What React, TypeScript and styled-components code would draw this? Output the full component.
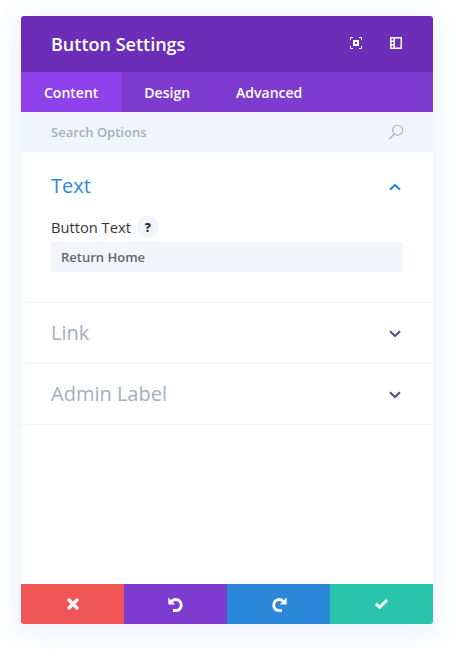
import React from "react";
import styled, { createGlobalStyle } from "styled-components";

const Global = createGlobalStyle`
  html, body { margin: 0; padding: 0; background: #fff; }
  body { font-family: "Open Sans", "Liberation Sans", sans-serif; }
`;

const Page = styled.div`
  width: 454px;
  height: 649px;
  padding: 16px 21px 25px;
  box-sizing: border-box;
  overflow: hidden;
`;

const Panel = styled.div`
  width: 412px;
  height: 608px;
  display: flex;
  flex-direction: column;
  background: #fff;
  border-radius: 3px;
  overflow: hidden;
  box-shadow: 0 5px 30px rgba(43, 135, 218, 0.13);
`;

const Header = styled.div`
  height: 56px;
  flex: none;
  display: flex;
  align-items: center;
  justify-content: space-between;
  background: #6c2eb9;
  padding: 0 31px 0 30px;
`;

const Title = styled.div`
  color: #fff;
  font-size: 18px;
  font-weight: 600;
`;

const HeaderIcons = styled.div`
  display: flex;
  gap: 28px;
  align-items: center;
  margin-top: -3px;
`;

const Tabs = styled.div`
  height: 40px;
  flex: none;
  display: flex;
  background: #7e3bd0;
`;

const Tab = styled.div<{ $active?: boolean }>`
  display: flex;
  align-items: center;
  padding: 0 23px;
  color: #fff;
  font-size: 14px;
  font-weight: 600;
  background: ${(p) => (p.$active ? "#8f42ec" : "transparent")};
`;

const Search = styled.div`
  height: 40px;
  flex: none;
  display: flex;
  align-items: center;
  justify-content: space-between;
  background: #f1f5f9;
  padding: 0 30px;
  color: #a3b0c2;
  font-size: 13px;
  font-weight: 600;
`;

const Section = styled.div<{ $open?: boolean }>`
  flex: none;
  height: ${(p) => (p.$open ? "150px" : "60px")};
  padding: 0 30px;
  border-bottom: 1px solid #f1f5f9;
`;

const SectionHead = styled.div<{ $open?: boolean }>`
  height: ${(p) => (p.$open ? "68px" : "60px")};
  display: flex;
  align-items: center;
  justify-content: space-between;
`;

const SectionTitle = styled.div<{ $open?: boolean }>`
  font-size: 20px;
  font-weight: 400;
  padding-bottom: 2px;
  color: ${(p) => (p.$open ? "#2b87da" : "#a3b0c2")};
`;

const Chevron = styled.svg`
  width: 12px;
  height: 8px;
  margin: 2px 2px 0 0;
  flex: none;
`;

const LabelRow = styled.div`
  display: flex;
  align-items: center;
  gap: 6px;
  height: 22px;
  margin-top: -4px;
`;

const Label = styled.div`
  color: #32373c;
  font-size: 14.7px;
  font-weight: 500;
`;

const Help = styled.div`
  width: 22px;
  height: 22px;
  border-radius: 50%;
  background: #f1f5f9;
  color: #2e2e4a;
  font-size: 12px;
  font-weight: 800;
  display: flex;
  align-items: center;
  justify-content: center;
`;

const Input = styled.div`
  height: 30px;
  margin-top: 4px;
  background: #f1f5f9;
  border-radius: 3px;
  padding: 0 10px;
  display: flex;
  align-items: center;
  color: #4c5866;
  font-size: 13px;
  font-weight: 600;
  opacity: 0.9;
`;

const Spacer = styled.div`
  flex: 1;
`;

const Footer = styled.div`
  height: 40px;
  flex: none;
  display: grid;
  grid-template-columns: repeat(4, 1fr);
`;

const FooterButton = styled.div<{ $bg: string }>`
  background: ${(p) => p.$bg};
  display: flex;
  align-items: center;
  justify-content: center;
`;

const ChevronIcon = ({ up, color }: { up?: boolean; color: string }) => (
  <Chevron viewBox="0 0 12 8">
    <path
      d={up ? "M1 6.700 6 2l5 4.700" : "M1 1.300 6 6l5-4.700"}
      fill="none"
      stroke={color}
      strokeWidth="2.200"
    />
  </Chevron>
);

export default function App() {
  return (
    <Page>
      <Global />
      <Panel>
        <Header>
          <Title>Button Settings</Title>
          <HeaderIcons>
            <svg width="12" height="12" viewBox="0 0 12 12" fill="none">
              <path
                d="M.5 3V.5H3M9 .5h2.500V3M11.500 9v2.500H9M3 11.500H.5V9"
                stroke="#fff"
                strokeWidth="1"
              />
              <path fillRule="evenodd" clipRule="evenodd" d="M3 3h6v6H3zM5 5v2h2V5z" fill="#fff" />
            </svg>
            <svg width="12" height="12" viewBox="0 0 12 12">
              <path
                fillRule="evenodd"
                clipRule="evenodd"
                d="M0 0h12v12H0zM1.500 1.500V3.500H3.500V1.500zM1.500 5V7H3.500V5zM1.500 8.500V10.500H3.500V8.500zM5 1.500V10.500H10.500V1.500z"
                fill="#fff"
              />
            </svg>
          </HeaderIcons>
        </Header>
        <Tabs>
          <Tab $active>Content</Tab>
          <Tab>Design</Tab>
          <Tab>Advanced</Tab>
        </Tabs>
        <Search>
          <span>Search Options</span>
          <svg width="16" height="16" viewBox="0 0 16 16" fill="none" style={{ marginRight: -1 }}>
            <circle cx="9.700" cy="6.200" r="5" stroke="#a3b0c2" strokeWidth="1.100" />
            <path d="M6.200 10 1.500 15" stroke="#a3b0c2" strokeWidth="1.300" />
          </svg>
        </Search>
        <Section $open>
          <SectionHead $open>
            <SectionTitle $open>Text</SectionTitle>
            <ChevronIcon up color="#2b87da" />
          </SectionHead>
          <LabelRow>
            <Label>Button Text</Label>
            <Help>?</Help>
          </LabelRow>
          <Input>Return Home</Input>
        </Section>
        <Section>
          <SectionHead>
            <SectionTitle>Link</SectionTitle>
            <ChevronIcon color="#4c5880" />
          </SectionHead>
        </Section>
        <Section>
          <SectionHead>
            <SectionTitle>Admin Label</SectionTitle>
            <ChevronIcon color="#4c5880" />
          </SectionHead>
        </Section>
        <Spacer />
        <Footer>
          <FooterButton $bg="#ef5555">
            <svg width="12" height="12" viewBox="0 0 12 12">
              <path d="M2 2l8 8M10 2l-8 8" stroke="#fff" strokeWidth="3.400" strokeLinecap="round" />
            </svg>
          </FooterButton>
          <FooterButton $bg="#7e3bd0">
            <svg width="16" height="15" viewBox="0 0 16 15" fill="none">
              <path d="M3.800 4.200A5.500 5.500 0 1 1 8 13.500H5" stroke="#fff" strokeWidth="2.800" />
              <path d="M.3 .6v7h7z" fill="#fff" />
            </svg>
          </FooterButton>
          <FooterButton $bg="#2b87da">
            <svg width="16" height="15" viewBox="0 0 16 15" fill="none">
              <path d="M12.200 4.200A5.500 5.500 0 1 0 8 13.500H11" stroke="#fff" strokeWidth="2.800" />
              <path d="M15.700 .6v7h-7z" fill="#fff" />
            </svg>
          </FooterButton>
          <FooterButton $bg="#29c4a9">
            <svg width="15" height="12" viewBox="0 0 14 11" fill="none">
              <path d="M1.800 5.300 5.300 8.500 12.200 1.800" stroke="#fff" strokeWidth="2.800" />
            </svg>
          </FooterButton>
        </Footer>
      </Panel>
    </Page>
  );
}
